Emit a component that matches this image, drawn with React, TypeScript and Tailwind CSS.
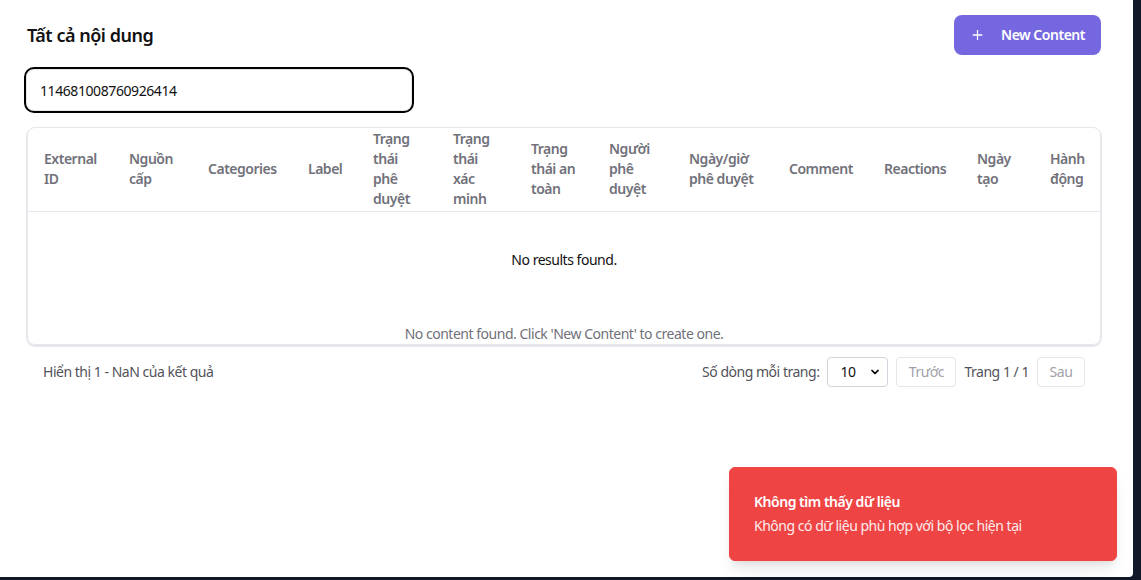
import { Plus, ChevronDown } from "lucide-react";

const columns: { label: string; width: number }[] = [
  { label: "External ID", width: 85 },
  { label: "Nguồn cấp", width: 79 },
  { label: "Categories", width: 100 },
  { label: "Label", width: 65 },
  { label: "Trạng thái phê duyệt", width: 80 },
  { label: "Trạng thái xác minh", width: 78 },
  { label: "Trạng thái an toàn", width: 78 },
  { label: "Người phê duyệt", width: 80 },
  { label: "Ngày/giờ phê duyệt", width: 100 },
  { label: "Comment", width: 95 },
  { label: "Reactions", width: 93 },
  { label: "Ngày tạo", width: 73 },
  { label: "Hành động", width: 66 },
];

export default function App() {
  return (
    <div
      className="w-[1141px] h-[580px] bg-[#111827] overflow-hidden tracking-[-0.03em]"
      style={{ fontFamily: '"Noto Sans", "Open Sans", sans-serif' }}
    >
      <div className="relative w-[1133px] h-[577px] bg-white rounded-br-sm pt-[15px] pl-[27px]">
        <div className="w-[1074px]">
          <div className="flex items-center justify-between h-10">
            <h1 className="text-[18px] font-semibold text-[#111111]">Tất cả nội dung</h1>
            <button className="h-10 w-[147px] flex items-center gap-4 px-4 rounded-lg bg-[#7467e0] text-white text-sm font-semibold whitespace-nowrap">
              <Plus className="w-4 h-4" strokeWidth={2} />
              New Content
            </button>
          </div>

          <div className="mt-[14px] -ml-px">
            <input
              readOnly
              value="114681008760926414"
              className="w-[386px] h-[42px] rounded-lg border border-gray-200 outline-2 outline-black px-[13px] pt-px text-sm text-[#111111] tracking-[-0.03em]"
            />
          </div>

          <div className="mt-[16px] border border-gray-200 rounded-lg shadow-[0_1px_0_1px_#e5e7eb] h-[218px] overflow-hidden">
            <table className="table-fixed w-full text-sm">
              <colgroup>
                {columns.map((c) => (
                  <col key={c.label} style={{ width: c.width }} />
                ))}
              </colgroup>
              <thead>
                <tr className="border-b border-gray-200">
                  {columns.map((c) => (
                    <th
                      key={c.label}
                      className="h-12 px-4 pt-px pb-[2px] text-left align-middle font-semibold text-[#71717a] leading-5"
                    >
                      {c.label}
                    </th>
                  ))}
                </tr>
              </thead>
              <tbody>
                <tr>
                  <td colSpan={13} className="h-24 text-center text-[#111111]">
                    No results found.
                  </td>
                </tr>
              </tbody>
              <caption className="caption-bottom mt-4 text-sm text-[#71717a]">
                No content found. Click 'New Content' to create one.
              </caption>
            </table>
          </div>

          <div className="flex items-center justify-between px-4 mt-[12px] h-[30px] text-sm">
            <span className="text-[#52525b]">Hiển thị 1 - NaN của kết quả</span>
            <div className="flex items-center">
              <span className="text-[#52525b]">Số dòng mỗi trang:</span>
              <div className="relative ml-2">
                <div className="w-[61px] h-[30px] border border-gray-300 rounded flex items-center pl-3 text-[#111111]">
                  10
                </div>
                <ChevronDown className="absolute right-[7px] top-[9px] w-3 h-3 text-black" strokeWidth={3.5} />
              </div>
              <button className="ml-2 h-[30px] w-[60px] border border-gray-200 rounded text-[#a1a1aa]">
                Trước
              </button>
              <span className="ml-2 text-[#52525b]">Trang 1 / 1</span>
              <button className="ml-2 h-[30px] w-[48px] border border-gray-200 rounded text-[#a1a1aa]">
                Sau
              </button>
            </div>
          </div>
        </div>

        <div className="absolute right-4 bottom-4 w-[388px] rounded-md border border-[#ef4444] bg-[#ef4444] p-6 pr-8 shadow-lg text-white">
          <div className="grid gap-1">
            <div className="text-sm font-semibold">Không tìm thấy dữ liệu</div>
            <div className="text-sm opacity-90">Không có dữ liệu phù hợp với bộ lọc hiện tại</div>
          </div>
        </div>
      </div>
    </div>
  );
}
